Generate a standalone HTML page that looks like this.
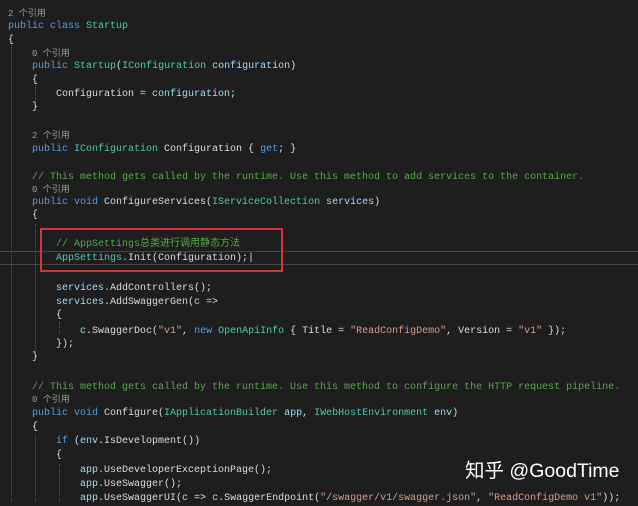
<!DOCTYPE html>
<html><head><meta charset="utf-8"><style>
body{margin:0;width:638px;height:500px;background:#1e1e1e;overflow:hidden;position:relative;font-family:"Liberation Mono","Noto Sans CJK SC",monospace;font-size:10px;color:#dcdcdc}
#w{position:absolute;left:0;top:2px;width:638px;height:500px}
.l{position:absolute;white-space:pre;height:14px;line-height:14px}
.c{font-size:9px;color:#9a9a9a}
.k{color:#569cd6}.t{color:#4ec9b0}.p{color:#9cdcfe}.g{color:#57a64a}.s{color:#d69d85}
.guide{position:absolute;border-left:1px dotted #555;width:0}
</style></head><body>
<div style="position:absolute;left:0;right:0;top:251px;height:12px;border-top:1px solid #464646;border-bottom:1px solid #464646"></div>
<div id="w">
<div class="guide" style="left:11px;top:40px;height:460px"></div>
<div class="guide" style="left:35px;top:80px;height:20px"></div>
<div class="guide" style="left:35px;top:222px;height:128px"></div>
<div class="guide" style="left:35px;top:433px;height:67px"></div>
<div class="guide" style="left:59px;top:320px;height:12px"></div>
<div class="guide" style="left:59px;top:462px;height:38px"></div>
<div class="l c" style="left:8px;top:5px">2 个引用</div>
<div class="l" style="left:8px;top:18px"><span class="k">public class</span> <span class="t">Startup</span></div>
<div class="l" style="left:8px;top:32px">{</div>
<div class="l c" style="left:32px;top:45px">0 个引用</div>
<div class="l" style="left:32px;top:58px"><span class="k">public</span> <span class="t">Startup</span>(<span class="t">IConfiguration</span> <span class="p">configuration</span>)</div>
<div class="l" style="left:32px;top:72px">{</div>
<div class="l" style="left:56px;top:86px">Configuration = <span class="p">configuration</span>;</div>
<div class="l" style="left:32px;top:99px">}</div>
<div class="l c" style="left:32px;top:127px">2 个引用</div>
<div class="l" style="left:32px;top:141px"><span class="k">public</span> <span class="t">IConfiguration</span> Configuration { <span class="k">get</span>; }</div>
<div class="l g" style="left:32px;top:169px">// This method gets called by the runtime. Use this method to add services to the container.</div>
<div class="l c" style="left:32px;top:181px">0 个引用</div>
<div class="l" style="left:32px;top:194px"><span class="k">public void</span> ConfigureServices(<span class="t">IServiceCollection</span> <span class="p">services</span>)</div>
<div class="l" style="left:32px;top:207px">{</div>
<div class="l g" style="left:56px;top:236px">// AppSettings总类进行调用静态方法</div>
<div class="l" style="left:56px;top:250px"><span class="t">AppSettings</span>.Init(Configuration);|</div>
<div style="position:absolute;left:40px;top:226px;width:239px;height:40px;border:2px solid #d8323a"></div>
<div class="l" style="left:56px;top:280px"><span class="p">services</span>.AddControllers();</div>
<div class="l" style="left:56px;top:294px"><span class="p">services</span>.AddSwaggerGen(<span class="p">c</span> =&gt;</div>
<div class="l" style="left:56px;top:307px">{</div>
<div class="l" style="left:80px;top:323px"><span class="p">c</span>.SwaggerDoc(<span class="s">"v1"</span>, <span class="k">new</span> <span class="t">OpenApiInfo</span> { Title = <span class="s">"ReadConfigDemo"</span>, Version = <span class="s">"v1"</span> });</div>
<div class="l" style="left:56px;top:336px">});</div>
<div class="l" style="left:32px;top:349px">}</div>
<div class="l g" style="left:32px;top:379px">// This method gets called by the runtime. Use this method to configure the HTTP request pipeline.</div>
<div class="l c" style="left:32px;top:391px">0 个引用</div>
<div class="l" style="left:32px;top:405px"><span class="k">public void</span> Configure(<span class="t">IApplicationBuilder</span> <span class="p">app</span>, <span class="t">IWebHostEnvironment</span> <span class="p">env</span>)</div>
<div class="l" style="left:32px;top:419px">{</div>
<div class="l" style="left:56px;top:433px"><span class="k">if</span> (<span class="p">env</span>.IsDevelopment())</div>
<div class="l" style="left:56px;top:447px">{</div>
<div class="l" style="left:80px;top:462px"><span class="p">app</span>.UseDeveloperExceptionPage();</div>
<div class="l" style="left:80px;top:476px"><span class="p">app</span>.UseSwagger();</div>
<div class="l" style="left:80px;top:490px"><span class="p">app</span>.UseSwaggerUI(<span class="p">c</span> =&gt; <span class="p">c</span>.SwaggerEndpoint(<span class="s">"/swagger/v1/swagger.json"</span>, <span class="s">"ReadConfigDemo v1"</span>));</div>
</div>
<div style="position:absolute;left:465px;top:459px;font-family:'Liberation Sans','Noto Sans CJK SC',sans-serif;font-size:19.5px;color:#fff;white-space:pre;line-height:24px">知乎 @GoodTime</div>
</body></html>
